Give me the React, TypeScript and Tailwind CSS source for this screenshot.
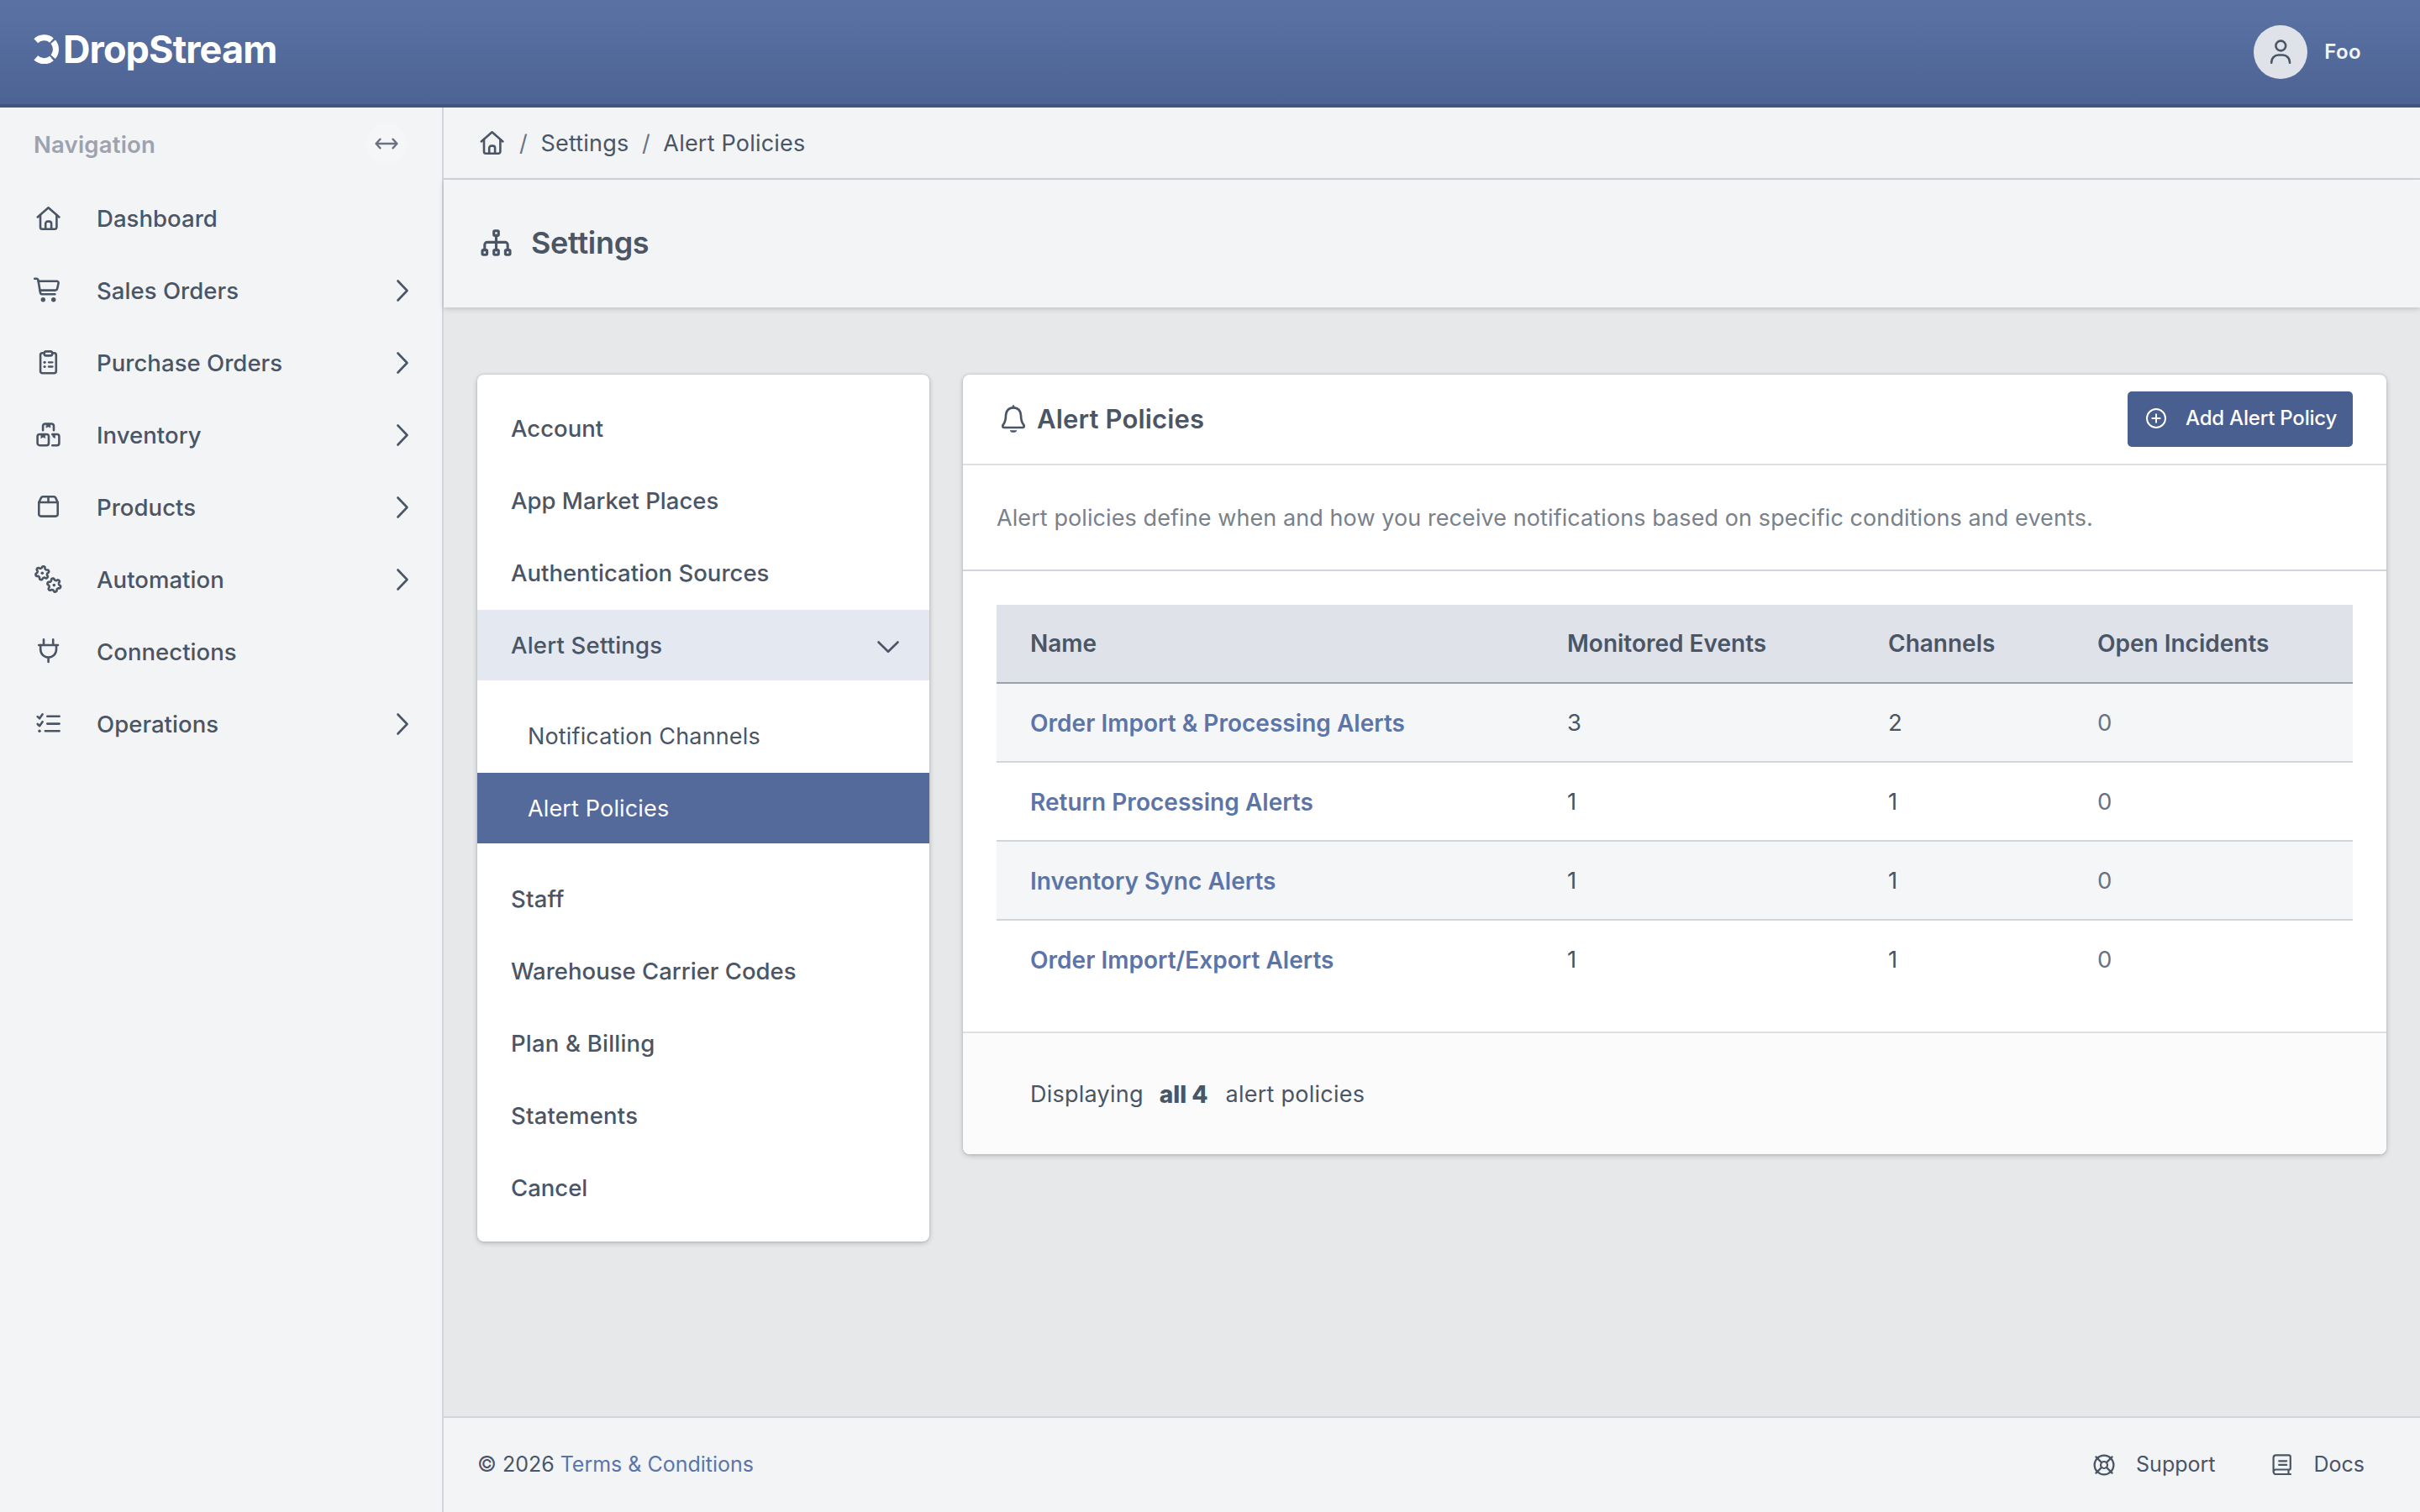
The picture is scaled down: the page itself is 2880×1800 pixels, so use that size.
import { ReactNode } from 'react';
import clsx from 'clsx';

/* ---------- icons ---------- */

type IconProps = { children: ReactNode; className?: string; viewBox?: string; stroke?: number };

const Icon = ({ children, className = 'w-9 h-9', viewBox = '0 0 36 36', stroke = 2.6 }: IconProps) => (
  <svg
    className={clsx('shrink-0 overflow-visible', className)}
    viewBox={viewBox}
    fill="none"
    stroke="currentColor"
    strokeWidth={stroke}
    strokeLinecap="round"
    strokeLinejoin="round"
  >
    {children}
  </svg>
);

const HomeIcon = () => (
  <Icon>
    <path d="M4.8 16.4 17.6 5.3l12.8 11.1" />
    <path d="M8 14v14.6a2.2 2.2 0 0 0 2.2 2.2h15a2.2 2.2 0 0 0 2.2-2.2V14" />
    <path d="M14.2 30.4v-6.2a2.6 2.6 0 0 1 2.6-2.6h1.7a2.6 2.6 0 0 1 2.6 2.6v6.2" />
  </Icon>
);

const CartIcon = () => (
  <Icon>
    <path d="M1.2 3.8h2.4a1.8 1.8 0 0 1 1.8 1.5l2.5 14.9a2.4 2.4 0 0 0 2.4 2h15.1" />
    <path d="M5.7 6.8h22a1.9 1.9 0 0 1 1.9 2.3l-1.4 6.5a2.6 2.6 0 0 1-2.5 2H7.6" />
    <circle cx="11.3" cy="28.8" r="2.7" fill="currentColor" stroke="none" />
    <circle cx="23.7" cy="28.8" r="2.7" fill="currentColor" stroke="none" />
  </Icon>
);

const ClipboardIcon = () => (
  <Icon>
    <path d="M12 6.3h-1.6a2.3 2.3 0 0 0-2.3 2.3V28a2.3 2.3 0 0 0 2.3 2.3h14.1a2.3 2.3 0 0 0 2.3-2.3V8.6a2.3 2.3 0 0 0-2.3-2.3H23" />
    <rect x="12.6" y="4.4" width="9.7" height="5" rx="2.3" />
    <path d="M17.9 17.3h4.6M17.9 22.5h4.6" strokeWidth="2.3" />
    <circle cx="13.1" cy="17.3" r="1.6" fill="currentColor" stroke="none" />
    <circle cx="13.1" cy="22.5" r="1.6" fill="currentColor" stroke="none" />
  </Icon>
);

const BoxesIcon = () => (
  <Icon>
    <path d="M11.1 12.2V7.1a2.6 2.6 0 0 1 2.6-2.6h7.7a2.6 2.6 0 0 1 2.6 2.6v5.1" />
    <rect x="4.6" y="17" width="13.4" height="13.2" rx="2.6" />
    <path d="M22.3 17h5.5a2.6 2.6 0 0 1 2.6 2.6v8a2.6 2.6 0 0 1-2.6 2.6h-5.5" />
    <path
      d="M15.2 4.5h4.7v4.6l-2.35-1.2-2.35 1.2zM9 17h4.7v4.6l-2.35-1.2L9 21.6zM22.2 17h3.3v4.6l-2.2-1.2z"
      fill="currentColor"
      strokeWidth="0.6"
    />
  </Icon>
);

const BoxIcon = () => (
  <Icon>
    <path d="M6.3 12v14.2a2.4 2.4 0 0 0 2.4 2.4h17.6a2.4 2.4 0 0 0 2.4-2.4V12" />
    <path d="M6.3 12l2.6-5.4A2.4 2.4 0 0 1 11 5.2h13a2.4 2.4 0 0 1 2.2 1.4l2.5 5.4z" />
    <path d="M17.5 5.2V12" />
  </Icon>
);

// wavy six-tooth outline around (cx, cy)
const gearPath = (cx: number, cy: number, phase: number) => {
  const pts: string[] = [];
  for (let i = 0; i < 72; i++) {
    const a = (i / 72) * Math.PI * 2;
    const r = 7 + 1.15 * Math.tanh(2 * Math.cos(6 * (a - phase)));
    pts.push(`${(cx + r * Math.cos(a)).toFixed(2)} ${(cy + r * Math.sin(a)).toFixed(2)}`);
  }
  return `M${pts.join('L')}Z`;
};

const GearsIcon = () => (
  <Icon>
    <path d={gearPath(10.3, 10.2, -1.35)} />
    <path d={gearPath(24.3, 24.6, 1.35)} />
    <circle cx="10.3" cy="10.2" r="1.8" fill="currentColor" stroke="none" />
    <circle cx="24.3" cy="24.6" r="1.8" fill="currentColor" stroke="none" />
  </Icon>
);

const PlugIcon = () => (
  <Icon>
    <path d="M12 3.2v6.2M23.2 3.2v6.2M6.2 10H29" />
    <path d="M8.2 10v5.2a9.4 9.4 0 0 0 18.8 0V10M17.6 24.6V30" />
  </Icon>
);

const ListCheckIcon = () => (
  <Icon>
    <path d="M16.3 8.7h14.3M16.3 17.6h14.3M13.9 26.3h16.7" />
    <path d="M4.7 9.1l2.4 2.2 3.5-5M4.7 18l2.4 2.2 3.5-5" />
    <circle cx="7" cy="26.3" r="1.7" fill="currentColor" stroke="none" />
  </Icon>
);

const SitemapIcon = () => (
  <Icon className="w-11 h-9" viewBox="0 0 44 36" stroke={3.1}>
    <rect x="19.7" y="2.8" width="5.6" height="5.6" rx="1.2" />
    <rect x="6" y="25.6" width="5.6" height="5.6" rx="1.2" />
    <rect x="19.7" y="25.6" width="5.6" height="5.6" rx="1.2" />
    <rect x="33.4" y="25.6" width="5.6" height="5.6" rx="1.2" />
    <path d="M22.5 8.4v17.2M8.8 25.6v-6.2a3 3 0 0 1 3-3h21.4a3 3 0 0 1 3 3v6.2" />
  </Icon>
);

const BellIcon = () => (
  <Icon className="w-10 h-9" viewBox="0 0 40 36" stroke={2.7}>
    <path d="M20 4.3c-5.6 0-9 4.1-9 9.2 0 5.9-1 8.4-3 10.9-.5.7-.7 1.3-.7 1.9 0 1.1.7 1.7 1.7 1.7h22c1 0 1.7-.6 1.7-1.7 0-.6-.2-1.2-.7-1.9-2-2.5-3-5-3-10.9 0-5.1-3.4-9.2-9-9.2zM20 2.6v1.7" />
    <path d="M15.8 31.2h8.4a4.3 3.4 0 0 1-8.4 0z" fill="currentColor" stroke="none" />
  </Icon>
);

const LifebuoyIcon = () => (
  <Icon className="w-[26px] h-[26px]" viewBox="0 0 26 26" stroke={2.2}>
    <circle cx="13" cy="13" r="11.4" />
    <circle cx="13" cy="13" r="4" />
    <path d="M3.4 3.4l6.7 6.7M22.6 3.4l-6.7 6.7M3.4 22.6l6.7-6.7M22.6 22.6l-6.7-6.7" />
  </Icon>
);

const BookIcon = () => (
  <Icon className="w-[26px] h-[26px]" viewBox="0 0 26 26" stroke={2.2}>
    <path d="M24 24H6.6a3 3 0 0 1-3-3V4.4a3 3 0 0 1 3-3h15.2a2 2 0 0 1 2 2v13.6a1.5 1.5 0 0 1-1.5 1.5H6.4a2.8 2.8 0 0 0-2.8 2.5M21.5 18.5V24" />
    <path d="M10.2 8.3h9M10.2 12.9h9" />
  </Icon>
);

const ChevronRight = () => (
  <Icon className="w-3.5 h-[26px]" viewBox="0 0 14 26">
    <path d="M1.5 1.5L12.5 13l-11 11.5" />
  </Icon>
);

/* ---------- data ---------- */

const NAV = [
  { label: 'Dashboard', icon: <HomeIcon /> },
  { label: 'Sales Orders', icon: <CartIcon />, more: true },
  { label: 'Purchase Orders', icon: <ClipboardIcon />, more: true },
  { label: 'Inventory', icon: <BoxesIcon />, more: true },
  { label: 'Products', icon: <BoxIcon />, more: true },
  { label: 'Automation', icon: <GearsIcon />, more: true },
  { label: 'Connections', icon: <PlugIcon /> },
  { label: 'Operations', icon: <ListCheckIcon />, more: true },
];

const COLUMNS = ['Name', 'Monitored Events', 'Channels', 'Open Incidents'];

const POLICIES = [
  { name: 'Order Import & Processing Alerts', events: 3, channels: 2, incidents: 0 },
  { name: 'Return Processing Alerts', events: 1, channels: 1, incidents: 0 },
  { name: 'Inventory Sync Alerts', events: 1, channels: 1, incidents: 0 },
  { name: 'Order Import/Export Alerts', events: 1, channels: 1, incidents: 0 },
];

/* ---------- layout ---------- */

const Header = () => (
  <header className="h-32 shrink-0 flex items-center justify-between pl-10 pr-[70px] border-b-4 border-[#41557f] bg-linear-to-b from-[#5b73a4] to-[#4c6394]">
    <div className="flex items-center text-white -mt-[9px]">
      <svg className="w-[34px] h-9" viewBox="0 0 34 36" fill="none" stroke="currentColor" strokeWidth="7">
        <path d="M2.8 8.7A14 14 0 0 1 21.5 8.1" />
        <path d="M23.2 9.8A14 14 0 0 1 23.2 27.8" />
        <path d="M2.8 28.9A14 14 0 0 0 21.5 29.5" />
      </svg>
      <span className="ml-px pt-0.5 text-[45px] leading-none font-bold tracking-[-0.9px]">DropStream</span>
    </div>
    <div className="flex items-center">
      <div className="w-16 h-16 rounded-full bg-[#dfe2e8] text-gray-600 flex items-center justify-center">
        <Icon className="w-[26px] h-[30px]" viewBox="0 0 26 30">
          <circle cx="13.3" cy="7.5" r="5.9" />
          <path d="M2.2 27.7v-.8a8.4 8.4 0 0 1 8.4-8.4h5a8.4 8.4 0 0 1 8.4 8.4v.8" />
        </Icon>
      </div>
      <span className="ml-5 text-2xl font-semibold tracking-[0.4px] text-gray-100">Foo</span>
    </div>
  </header>
);

const Sidebar = () => (
  <aside className="w-[528px] shrink-0 border-r-2 border-gray-300 bg-gray-100">
    <div className="flex items-center justify-between h-[86px] mb-1 pl-10 pr-[42px]">
      <span className="pt-[3px] text-[27.5px] font-semibold tracking-[0.2px] text-[#9ca3af]">Navigation</span>
      <button className="w-12 h-12 rounded-full bg-[#f5f6f8] flex items-center justify-center text-gray-500">
        <Icon className="w-7 h-3.5" viewBox="0 0 28 14" stroke={2.3}>
          <path d="M1.5 7h25M6.5 1.6L1.5 7l5 5.4M21.5 1.6l5 5.4-5 5.4" />
        </Icon>
      </button>
    </div>
    <nav className="flex flex-col gap-0.5">
      {NAV.map(item => (
        <a key={item.label} href="#" className="h-21 flex items-center px-10 text-gray-600">
          {item.icon}
          <span className="ml-[39px] pt-0.5 flex-1 text-[27.5px] font-medium tracking-[0.05px]">{item.label}</span>
          {item.more && <ChevronRight />}
        </a>
      ))}
    </nav>
  </aside>
);

const Breadcrumb = () => (
  <div className="h-[86px] shrink-0 flex items-center px-10 border-b-2 border-gray-300 bg-gray-100">
    <HomeIcon />
    <div className="ml-[14px] pt-0.5 flex gap-[15.5px] text-[27px] tracking-[0.2px]">
      <span className="text-gray-500">/</span>
      <a href="#">Settings</a>
      <span className="text-gray-500">/</span>
      <span>Alert Policies</span>
    </div>
  </div>
);

const MenuItem = ({ label, className, children }: { label: string; className?: string; children?: ReactNode }) => (
  <a href="#" className={clsx('h-21 flex items-center justify-between pr-9', className)}>
    <span className="pt-0.5">{label}</span>
    {children}
  </a>
);

const SettingsMenu = () => (
  <div className="w-[538px] shrink-0 rounded-lg bg-white py-[22px] shadow-[0_2px_6px_rgba(0,0,0,0.2),0_0_3px_rgba(0,0,0,0.14)]">
    <div className="flex flex-col gap-0.5 text-[27.5px] font-medium">
      <MenuItem label="Account" className="pl-10" />
      <MenuItem label="App Market Places" className="pl-10" />
      <MenuItem label="Authentication Sources" className="pl-10" />
      <MenuItem label="Alert Settings" className="pl-10 tracking-[0.2px] bg-[#e3e8f1]">
        <Icon className="w-[26px] h-3.5 mt-1" viewBox="0 0 26 14">
          <path d="M1.5 1.5L13 12.8 24.5 1.5" />
        </Icon>
      </MenuItem>
    </div>
    <div className="flex flex-col gap-0.5 my-6 text-[27px] tracking-[0.15px]">
      <MenuItem label="Notification Channels" className="pl-15" />
      <MenuItem label="Alert Policies" className="pl-15 bg-[#536a9b] text-white" />
    </div>
    <div className="flex flex-col gap-0.5 text-[27.5px] font-medium">
      <MenuItem label="Staff" className="pl-10 tracking-[0.2px]" />
      <MenuItem label="Warehouse Carrier Codes" className="pl-10" />
      <MenuItem label="Plan & Billing" className="pl-10 tracking-[0.2px]" />
      <MenuItem label="Statements" className="pl-10 tracking-[0.2px]" />
      <MenuItem label="Cancel" className="pl-10" />
    </div>
  </div>
);

const PoliciesTable = () => (
  <table className="w-full table-fixed border-separate border-spacing-0 text-left">
    <colgroup>
      <col className="w-[639px]" />
      <col className="w-[382px]" />
      <col className="w-[249px]" />
      <col />
    </colgroup>
    <thead>
      <tr className="h-[94px] bg-[#dfe2e8] text-[28px]">
        {COLUMNS.map(c => (
          <th key={c} className="px-10 py-0 font-semibold border-b-2 border-gray-400">{c}</th>
        ))}
      </tr>
    </thead>
    <tbody>
      {POLICIES.map(p => (
        <tr
          key={p.name}
          className="h-[94px] last:h-[92px] text-[27.5px] odd:bg-[#f4f6f8] *:px-10 *:pt-0.5 *:pb-0 *:border-b-2 *:border-gray-300 last:*:border-0"
        >
          <td>
            <a href="#" className="text-[28px] font-semibold tracking-[0.03px] text-[#5c75a8]">{p.name}</a>
          </td>
          <td>{p.events}</td>
          <td>{p.channels}</td>
          <td className="text-gray-500">{p.incidents}</td>
        </tr>
      ))}
    </tbody>
  </table>
);

const PoliciesCard = () => (
  <div className="flex-1 rounded-lg bg-white overflow-hidden shadow-[0_2px_6px_rgba(0,0,0,0.2),0_0_3px_rgba(0,0,0,0.14)]">
    <div className="h-[108px] flex items-center px-10 border-b-2 border-[#dddfe1]">
      <BellIcon />
      <h2 className="ml-2 flex-1 text-[31px] font-semibold tracking-[0.15px]">Alert Policies</h2>
      <button className="w-[268px] h-[66px] rounded-[5px] bg-[#495f8f] text-white flex items-center pl-[22px] pb-0.5">
        <Icon className="w-6 h-6" viewBox="0 0 24 24" stroke={2}>
          <circle cx="12" cy="12" r="11" />
          <path d="M12 7.3v9.4M7.3 12h9.4" />
        </Icon>
        <span className="ml-[23px] text-2xl font-medium tracking-[-0.2px] whitespace-nowrap">Add Alert Policy</span>
      </button>
    </div>
    <p className="h-[126px] pt-0.5 flex items-center px-10 border-b-2 border-gray-300 text-[27px] tracking-[0.084px] text-[#78818c]">
      Alert policies define when and how you receive notifications based on specific conditions and events.
    </p>
    <div className="p-10">
      <PoliciesTable />
    </div>
    <div className="h-[146px] pt-0.5 flex items-center px-20 border-t-2 border-[#dddfe1] bg-[#fbfbfb] text-[27px] tracking-[0.25px]">
      Displaying <b className="ml-[19px] mr-[21px] text-[28px] font-extrabold tracking-normal">all 4</b> alert policies
    </div>
  </div>
);

const Footer = () => (
  <footer className="h-[114px] shrink-0 flex items-center pl-10 pr-[66px] border-t-2 border-gray-300 bg-gray-100 text-[25px]">
    <span>© 2026</span>
    <a href="#" className="ml-[7px] flex-1 text-[#5c75a8]">Terms &amp; Conditions</a>
    <a href="#" className="flex items-center gap-[25px]">
      <LifebuoyIcon />
      Support
    </a>
    <a href="#" className="ml-[66px] flex items-center gap-[25px]">
      <BookIcon />
      Docs
    </a>
  </footer>
);

export default function App() {
  return (
    <div className="h-[1800px] flex flex-col overflow-hidden bg-[#e6e8ea] text-gray-600 font-['Inter',sans-serif]">
      <Header />
      <div className="flex-1 flex min-h-0">
        <Sidebar />
        <main className="flex-1 flex flex-col">
          <Breadcrumb />
          <div className="h-[152px] shrink-0 flex items-center px-10 bg-gray-100 shadow-[0_2px_6px_rgba(0,0,0,0.16)]">
            <SitemapIcon />
            <h1 className="ml-5 pb-0.5 text-4xl font-semibold tracking-[-0.3px]">Settings</h1>
          </div>
          <div className="flex-1 flex items-start gap-10 px-10 pt-20">
            <SettingsMenu />
            <PoliciesCard />
          </div>
          <Footer />
        </main>
      </div>
    </div>
  );
}
